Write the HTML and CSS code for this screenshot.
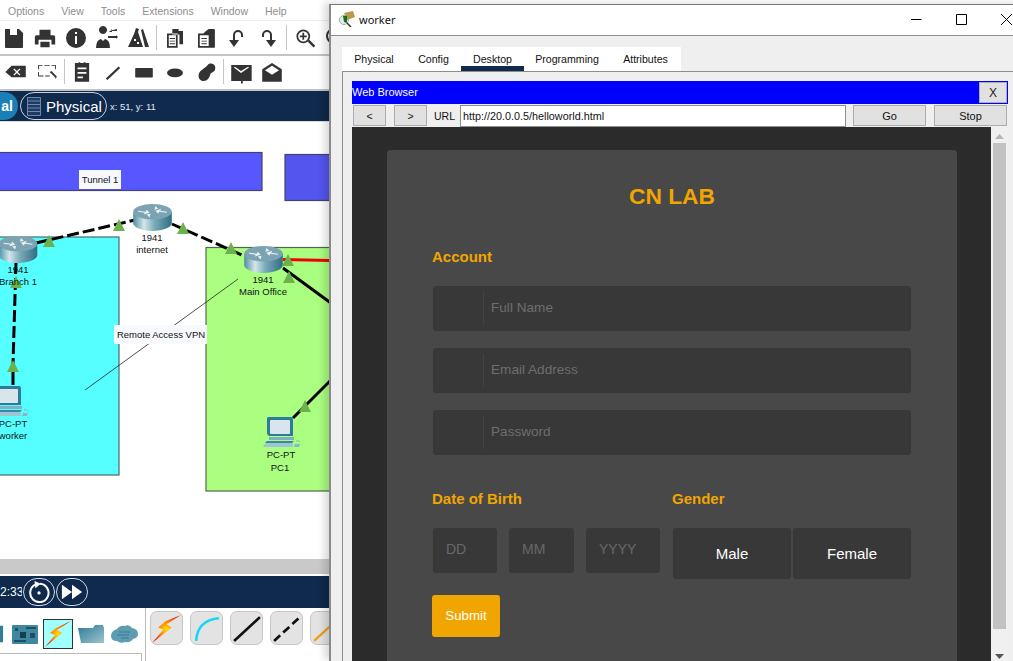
FILE: index.html
```html
<!DOCTYPE html>
<html lang="en">
<head>
<meta charset="utf-8">
<title>worker</title>
<link rel="stylesheet" href="styles.css">
</head>
<body>
<svg class="defs" width="0" height="0" aria-hidden="true">
  <defs>
    <linearGradient id="rbody" x1="0" x2="1" y1="0" y2="0">
      <stop offset="0" stop-color="#4f8ea3"/><stop offset=".28" stop-color="#d4e6ea"/><stop offset=".55" stop-color="#7aaab8"/><stop offset="1" stop-color="#2f6d84"/>
    </linearGradient>
    <radialGradient id="bolt" cx=".5" cy=".5" r=".55">
      <stop offset="0" stop-color="#ffe100"/><stop offset=".45" stop-color="#ff8a00"/><stop offset="1" stop-color="#f01800"/>
    </radialGradient>
    <linearGradient id="folder" x1="0" x2="1" y1="0" y2="1">
      <stop offset="0" stop-color="#2d7a94"/><stop offset="1" stop-color="#9cc4d0"/>
    </linearGradient>
    <symbol id="router" viewBox="0 0 40 28">
      <path d="M0 8v12c0 4 9 8 20 8s20-4 20-8V8z" fill="url(#rbody)"/>
      <ellipse cx="20" cy="8" rx="20" ry="8" fill="#7ba3b1"/>
      <path d="M5 7l8 1 1-2 3 3-6 2 1-2-7-1zM35 9l-8-1-1 2-3-3 6-2-1 2 7 1zM23 2l3 3-4 1zM17 14l-3-3 4-1z" fill="#e8f2f4"/>
    </symbol>
    <symbol id="pc" viewBox="0 0 38 32">
      <path d="M5 1h24l1 2v17H6L4 18V2z" fill="#2f7c98"/>
      <rect x="7" y="4" width="20" height="14" rx="1" fill="#d8e5ec"/>
      <path d="M6 21h25v3H6z" fill="#7fb0c2"/><path d="M4 25h27l-2 2H2z" fill="#3b87a2"/>
      <path d="M0 30l3-3h27v4H1z" fill="#9cc6d4"/><path d="M32 28l5 0-1 3h-5z" fill="#87b7c8"/>
      <path d="M33 25q3-1 4 1" fill="none" stroke="#87b7c8"/>
    </symbol>
  </defs>
</svg>

<div class="desktop">
  <section class="main">
    <nav class="menu">
      <span>Options</span><span>View</span><span>Tools</span><span>Extensions</span><span>Window</span><span>Help</span>
    </nav>

    <div class="tools row-one">
      <svg class="ico" viewBox="0 0 24 24"><path fill-rule="evenodd" d="M3 3h14l4 4v14q0 1-1 1H4q-1 0-1-1zM8 3v6h7V3z"/></svg>
      <svg class="ico" viewBox="-1 -1 26 26"><path fill-rule="evenodd" d="M6 3h12v6H6zM3 9h18q2 0 2 2v8h-4v-5H5v5H1v-8q0-2 2-2zM7 16h10v6H7z"/></svg>
      <svg class="ico" viewBox="0 0 24 24"><path fill-rule="evenodd" d="M12 2a10 10 0 1 1 0 20 10 10 0 0 1 0-20zM11 6v2h2V6zM11 10v8h2v-8z"/></svg>
      <svg class="ico" viewBox="0 0 24 24"><path d="M8 8a4 4 0 1 1 .01 0zM1 22q0-8 5-9l2 2 2-2q5 1 5 9zM14 5h8V3zM14 6l3-3v3zM13 10h8v2h-8zM21 9v4l2-2z"/></svg>
      <svg class="ico" viewBox="0 0 24 24"><path fill-rule="evenodd" d="M10 2l3 1-1 3 5 15H2L8 8zM8 13v2h2v-2zM11 16v2h2v-2zM15 4l2-1 6 18h-4z"/></svg>
      <i class="sep"></i>
      <svg class="ico" viewBox="-1.500 -1.500 27 27"><path fill-rule="evenodd" d="M9 2h7v2h5v15h-4V8h-8zM3 7h12v16H3zM5 9v12h8V9zM6 12h6v1H6zM6 15h6v1H6zM6 18h6v1H6z"/></svg>
      <svg class="ico" viewBox="-1.500 -1.500 27 27"><path fill-rule="evenodd" d="M3 7h6l3-3 3-2h6q1 0 1 1v19q0 1-1 1H3zM5 9v12h10V9zM7 12h6v1H7zM7 15h6v1H7zM7 18h6v1H7z"/></svg>
      <svg class="ico" viewBox="0 0 24 24"><path class="ico-line" d="M9 15V9a4 4 0 0 1 8 0v2"/><path d="M4 14h10l-5 7z"/></svg>
      <svg class="ico" viewBox="0 0 24 24"><path class="ico-line" d="M15 15V9a4 4 0 0 0-8 0v2"/><path d="M10 14h10l-5 7z"/></svg>
      <i class="sep"></i>
      <svg class="ico" viewBox="-2 -2 28 28"><path fill-rule="evenodd" d="M10 2a8 8 0 1 1 0 16 8 8 0 0 1 0-16zM10 4a6 6 0 1 0 0 12 6 6 0 0 0 0-12zM9 6h2v3h3v2h-3v3H9v-3H6V9h3zM15 16l2-2 7 7-2 2z"/></svg>
      <svg class="ico" viewBox="0 0 24 24"><path fill-rule="evenodd" d="M10 2a8 8 0 1 1 0 16 8 8 0 0 1 0-16zM10 4a6 6 0 1 0 0 12 6 6 0 0 0 0-12z"/></svg>
    </div>

    <div class="tools row-two">
      <svg class="ico" viewBox="-1.500 -1.500 27 27"><path fill-rule="evenodd" d="M7 5h16v13H7L0 12zM10 8l-1 1 3 3-3 3 1 1 3-3 3 3 1-1-3-3 3-3-1-1-3 3z"/></svg>
      <svg class="ico" viewBox="-1.500 -1.500 27 27"><path d="M3 4h4v1H3zM9 4h6v1H9zM17 4h5v1h-5zM21 5h1v4h-1zM2 4h1v5H2zM2 12h1v5H2zM3 16h5v1H3zM10 16h5v1h-5zM15 12l2-1 6 6-1 3-1-2z"/></svg>
      <i class="sep"></i>
      <svg class="ico" viewBox="-1.500 -1.500 27 27"><path fill-rule="evenodd" d="M4 2h4V1h2v1h4V1h2v1h4v21H4zM7 7v2h10V7zM7 12v2h10v-2zM7 17v2h6v-2z"/></svg>
      <svg class="ico" viewBox="-3 -3 30 30"><path d="M3 20L19 5l2 2L5 22z"/></svg>
      <svg class="ico" viewBox="-3 -3 30 30"><rect x="1" y="7" width="22" height="12" rx="1"/></svg>
      <svg class="ico" viewBox="-3 -3 30 30"><ellipse cx="12" cy="13" rx="10" ry="5.500"/></svg>
      <svg class="ico" viewBox="-1.500 -1.500 27 27"><path d="M15 3c5-2 9 2 7 7-1 2-3 2-5 4-1 5-4 9-9 8-4-1-5-5-4-8 1-4 7-6 11-11z"/></svg>
      <i class="sep"></i>
      <svg class="ico" viewBox="-1.500 -1.500 27 27"><path fill-rule="evenodd" d="M1 4h23v18H14v3h-2v-3H1zM4 7l8 6 9-6-1-1-8 5-7-5z"/></svg>
      <svg class="ico" viewBox="-1.500 -1.500 27 27"><path fill-rule="evenodd" d="M12 2l11 7v14H1V9zM12 5L4 10l8 5 8-5z"/></svg>
    </div>

    <div class="navbar">
      <span class="pill-logical">al</span>
      <span class="pill-physical">
        <svg class="rack" viewBox="0 0 14 19"><path d="M.5.500h13v18H.5zM.5 4h13M.5 7.500h13M.5 11h13M.5 14.500h13" fill="#1c3c66" stroke="#7088a8"/></svg>
        <span>Physical</span>
      </span>
      <span class="coords">x: 51, y: 11</span>
    </div>

    <div class="canvas">
      <svg class="diagram" viewBox="0 122 330 437">
        <rect class="tunnel" x="-6" y="152.500" width="268" height="38"/>
        <rect class="tunnel dim" x="285" y="154.500" width="60" height="46"/>
        <rect class="cyan" x="-10" y="237" width="129" height="238"/>
        <rect class="lime" x="206" y="247.500" width="140" height="243.500"/>
        <path class="thin" d="M238 279L85 390"/>
        <path class="dash" d="M36 243L135 220M172 224L244 256M16 262L13 364"/>
        <path class="solid" d="M13 372V385M283 268L335 306M335 376L293 418"/>
        <path class="red" d="M283 259.500L335 260.500"/>
        <use href="#router" x="133" y="204" width="39" height="27"/>
        <use href="#router" x="-2" y="236" width="40" height="27"/>
        <use href="#router" x="244" y="246" width="39" height="27"/>
        <use href="#pc" x="-10" y="385" width="40" height="32"/>
        <use href="#pc" x="263" y="416" width="38" height="32"/>
        <path class="tri" d="M119 219l6 12h-12zM49 235l6 12h-12zM183 222l6 12h-12zM231 242l6 12h-12zM288 254l6 12h-12zM289 271l6 12h-12zM16 276l6 12h-12zM13 360l6 12h-12zM305 400l6 12h-12z"/>
        <rect class="tag" x="79" y="170" width="42" height="19"/>
        <rect class="tag" x="114" y="325" width="93" height="19"/>
        <text class="lbl" x="100" y="183">Tunnel 1</text>
        <text class="lbl" x="161" y="338">Remote Access VPN</text>
        <text class="lbl" x="152" y="241">1941</text>
        <text class="lbl" x="152" y="253">internet</text>
        <text class="lbl" x="18" y="273">1941</text>
        <text class="lbl" x="18" y="285">Branch 1</text>
        <text class="lbl" x="263" y="283">1941</text>
        <text class="lbl" x="263" y="295">Main Office</text>
        <text class="lbl" x="13" y="427">PC-PT</text>
        <text class="lbl" x="13" y="439">worker</text>
        <text class="lbl" x="281" y="458">PC-PT</text>
        <text class="lbl" x="280" y="471">PC1</text>
      </svg>
    </div>
    <div class="hscroll"></div>

    <div class="timebar">
      <span class="clock">2:33</span>
      <span class="round">
        <svg class="round-ico" viewBox="0 0 24 24"><path d="M8 4a10 10 0 1 0 5-1" fill="none" stroke="#fff" stroke-width="2.200"/><path d="M7 0l7 3-6 5z" fill="#fff"/><circle cx="12" cy="13" r="1.800" fill="#fff"/></svg>
      </span>
      <span class="round">
        <svg class="round-ico" viewBox="0 0 24 24"><path d="M1 4l11 8-11 8zM12 4l11 8-11 8z" fill="#fff"/></svg>
      </span>
    </div>

    <div class="palette">
      <div class="cats">
        <div class="cat-row">
          <svg class="cat cat-cut" viewBox="0 0 4 22"><rect width="4" height="22" fill="#2e7f9b"/></svg>
          <svg class="cat cat-board" viewBox="0 0 26 19"><rect width="26" height="19" rx="1" fill="#3d87a0"/><rect x="8" y="7" width="6" height="6" fill="#1a3d4c"/><path d="M14 2h10v2H14zM2 15h12v2H2zM3 3h3v3H3zM18 8h5v5h-5z" fill="#204f60"/></svg>
          <span class="cat-on">
            <svg class="cat-bolt" viewBox="0 0 28 28"><path d="M27 1L13 10l5 3L1 27l10-12-5-2 6-5z" fill="url(#bolt)"/></svg>
          </span>
          <svg class="cat cat-folder" viewBox="0 0 27 20"><path d="M17 1h8l1 3v15H3L0 4h15z" fill="url(#folder)"/></svg>
          <svg class="cat cat-cloud" viewBox="0 0 28 18"><path d="M6 4q3-4 8-3 4-2 7 2 6 1 6 6 0 4-5 5-3 4-8 3-5 2-8-1-6 0-6-5 0-5 6-7z" fill="#5e9cb2"/><path d="M8 7h11M6 10h12M10 13h8" stroke="#3a7a92" fill="none"/></svg>
        </div>
        <div class="cat-list"></div>
      </div>
      <div class="links">
        <span class="link"><svg class="link-ico" viewBox="0 0 30 30"><path d="M29 2L15 11l5 3L1 29l11-13-5-2 7-6z" fill="url(#bolt)"/></svg></span>
        <span class="link"><svg class="link-ico" viewBox="0 0 30 30"><path d="M5 27Q6 7 27 5" fill="none" stroke="#19d7f4" stroke-width="2.500"/></svg></span>
        <span class="link"><svg class="link-ico" viewBox="0 0 30 30"><path d="M3 27L28 4" stroke="#111" stroke-width="2.600"/></svg></span>
        <span class="link"><svg class="link-ico" viewBox="0 0 30 30"><path d="M3 27L28 4" stroke="#111" stroke-width="2.600" stroke-dasharray="8 4"/></svg></span>
        <span class="link"><svg class="link-ico" viewBox="0 0 30 30"><path d="M3 27L28 4" stroke="#f39c12" stroke-width="2.200"/></svg></span>
      </div>
    </div>
  </section>

  <section class="window">
    <header class="titlebar">
      <svg class="win-ico" viewBox="0 0 18 16"><circle cx="6" cy="9" r="4.500" fill="#e6eee6" stroke="#9aa"/><path d="M9 12l4 4" stroke="#333" stroke-width="1.500"/><path d="M6 2l9-2 2 6-8 3z" fill="#b89a4a"/><path d="M5 5l4 0 0 7-3-1z" fill="#14701e"/></svg>
      <span class="win-title">worker</span>
      <span class="controls">
        <span class="ctl"><svg class="ctl-ico" viewBox="0 0 11 11"><path d="M0 5.500h10.500" stroke="#000"/></svg></span>
        <span class="ctl"><svg class="ctl-ico" viewBox="0 0 11 11"><path d="M.5.500h10v10H.5z" fill="none" stroke="#000"/></svg></span>
        <span class="ctl"><svg class="ctl-ico" viewBox="0 0 11 11"><path d="M0 0l11 11M11 0L0 11" stroke="#000"/></svg></span>
      </span>
    </header>
    <div class="win-body">
      <div class="tabs">
        <span class="tab t-physical">Physical</span>
        <span class="tab t-config">Config</span>
        <span class="tab t-desktop active">Desktop</span>
        <span class="tab t-programming">Programming</span>
        <span class="tab t-attributes">Attributes</span>
      </div>
      <div class="panel">
        <div class="browser">
          <div class="browser-head">
            <span class="head-title">Web Browser</span>
            <span class="head-x">X</span>
          </div>
          <div class="urlrow">
            <span class="btn nav-btn">&lt;</span>
            <span class="btn nav-btn">&gt;</span>
            <span class="url-label">URL</span>
            <span class="url-field">http://20.0.0.5/helloworld.html</span>
            <span class="btn cmd-btn">Go</span>
            <span class="btn cmd-btn">Stop</span>
          </div>
          <div class="viewport">
            <div class="page">
              <div class="card">
                <h1 class="card-title">CN LAB</h1>
                <h2 class="section first">Account</h2>
                <div class="field"><i class="field-icon"></i><span class="ph">Full Name</span></div>
                <div class="field"><i class="field-icon"></i><span class="ph">Email Address</span></div>
                <div class="field"><i class="field-icon"></i><span class="ph">Password</span></div>
                <div class="split">
                  <div class="split-col">
                    <h2 class="section">Date of Birth</h2>
                    <div class="dates">
                      <span class="date d-dd">DD</span>
                      <span class="date d-mm">MM</span>
                      <span class="date d-yy">YYYY</span>
                    </div>
                  </div>
                  <div class="split-col">
                    <h2 class="section">Gender</h2>
                    <div class="genders">
                      <span class="gender">Male</span>
                      <span class="gender">Female</span>
                    </div>
                  </div>
                </div>
                <span class="submit">Submit</span>
              </div>
            </div>
            <div class="vscroll">
              <svg class="arrow" viewBox="0 0 9 5"><path d="M4.500 0L9 5H0z" fill="#b5b5b5"/></svg>
              <div class="thumb"></div>
              <svg class="arrow" viewBox="0 0 9 5"><path d="M0 0h9L4.500 5z" fill="#555"/></svg>
            </div>
          </div>
        </div>
      </div>
    </div>
  </section>
</div>
</body>
</html>
```

FILE: styles.css
```css
* { box-sizing: border-box; }
html, body { margin: 0; padding: 0; background: #fff; }
body { font-family: "Liberation Sans", Arial, sans-serif; }
.defs { position: absolute; }

.desktop { position: relative; width: 1013px; height: 661px; overflow: hidden; }

/* back window */
.main { width: 335px; height: 661px; display: flex; flex-direction: column; background: #fff; }

.menu { height: 21px; flex: none; display: flex; gap: 17px; align-items: center; padding: 1px 0 0 8px; font-size: 10.500px; color: #8e8e8e; border-bottom: 1px solid #eee; }

.tools { flex: none; display: flex; align-items: center; height: 35px; gap: 7px; overflow: hidden; border-bottom: 2px solid #c4c4c4; }
.row-one { padding-left: 2px; }
.row-two { padding: 0 0 2px 4px; height: 35px; }
.row-two .sep { margin: 0 -2px; }
.ico { width: 24px; height: 24px; flex: none; fill: #333; }
.ico-line { fill: none; stroke: #333; stroke-width: 2; }
.sep { flex: none; width: 1px; height: 25px; background: #c6c6c6; margin: 0 -1px; }

.navbar { flex: none; height: 31px; background: #0f2a4d; display: flex; align-items: center; position: relative; border-bottom: 1px solid #ddd; }
.pill-logical { width: 18px; height: 28px; margin-right: 2px; background: #1a7fb5; color: #fff; border-radius: 0 14px 14px 0; font-size: 14px; font-weight: bold; display: flex; align-items: center; justify-content: flex-end; padding-right: 5px; }
.pill-physical { width: 87px; height: 28px; border: 1px solid #c9d4e2; border-radius: 14px; color: #fff; display: flex; align-items: center; font-size: 15px; padding: 1px 0 0 6px; gap: 5px; }
.rack { width: 14px; height: 19px; flex: none; }
.coords { color: #e6ebf2; font-size: 9.500px; margin-left: 3px; }

.canvas { flex: none; height: 437px; background: #fff; overflow: hidden; }
.diagram { display: block; width: 330px; height: 437px; }
.tunnel { fill: #5757ff; stroke: #44446a; stroke-width: 1.200; }
.tunnel.dim { fill: #5454ee; }
.cyan { fill: #55ffff; stroke: #4c6a6a; stroke-width: 1.200; }
.lime { fill: #aaff80; stroke: #556650; stroke-width: 1.200; }
.thin { stroke: #222; stroke-width: .8; fill: none; }
.dash { stroke: #000; stroke-width: 3; stroke-dasharray: 12 4; fill: none; }
.solid { stroke: #000; stroke-width: 3; fill: none; }
.red { stroke: #f00000; stroke-width: 3; fill: none; }
.tri { fill: #6bb24c; }
.tag { fill: #f8f8ff; }
.lbl { font-family: "Liberation Sans", Arial, sans-serif; font-size: 9.500px; text-anchor: middle; fill: #111; }

.hscroll { flex: none; height: 15px; background: #c9c9c9; border-top: 0; }

.timebar { flex: none; height: 32px; margin-top: 2px; background: #0f2a4d; display: flex; align-items: center; gap: 1px; color: #fff; font-size: 12px; position: relative; }
.clock { width: 22px; text-align: right; overflow: hidden; white-space: nowrap; }
.round { width: 32px; height: 28px; border: 1px solid #d5dbe6; border-radius: 14px; display: flex; align-items: center; justify-content: center; }
.round-ico { width: 22px; height: 22px; }

.palette { flex: 1; display: flex; min-height: 0; background: #fff; }
.cats { width: 146px; flex: none; border-right: 1px solid #bbb; display: flex; flex-direction: column; }
.cat-row { height: 45px; display: flex; align-items: center; padding-top: 7px; flex: none; position: relative; }
.cat { flex: none; }
.cat-cut { width: 3px; height: 22px; margin-right: 9px; }
.cat-board { width: 26px; height: 19px; margin-right: 5px; }
.cat-on { width: 30px; height: 30px; background: #a0ffff; border: 1px solid #333; display: flex; align-items: center; justify-content: center; margin-right: 5px; }
.cat-bolt { width: 28px; height: 28px; }
.cat-folder { width: 27px; height: 20px; margin-right: 6px; }
.cat-cloud { width: 28px; height: 18px; }
.cat-list { flex: 1; width: 142px; margin-top: 0; border: 1px solid #bbb; border-left: 0; border-bottom: 0; }
.links { display: flex; gap: 7px; padding: 3px 0 0 4px; align-items: flex-start; overflow: hidden; }
.link { flex: none; width: 33px; height: 34px; background: #e3e3e3; border: 1px solid #c6c6c6; border-radius: 7px; display: flex; align-items: center; justify-content: center; }
.link-ico { width: 31px; height: 31px; }

/* front window */
.window { position: absolute; left: 329px; top: 4px; width: 701px; height: 657px; background: #efefef; border-left: 2px solid #8a8a8a; border-top: 1px solid #777; display: flex; flex-direction: column; box-shadow: -5px -1px 7px rgba(0,0,0,.14); }
.titlebar { flex: none; height: 31px; background: #fff; border-bottom: 1px solid #8d8d8d; display: flex; align-items: center; padding: 0 1px 2px 7px; }
.win-ico { width: 18px; height: 16px; flex: none; margin-right: 3px; }
.win-title { font-family: "Noto Sans", sans-serif; font-size: 11px; color: #111; }
.controls { margin-left: auto; display: flex; }
.ctl { width: 45px; height: 28px; display: flex; align-items: center; justify-content: center; }
.ctl-ico { width: 11px; height: 11px; }

.win-body { flex: 1; min-height: 0; padding: 11px 0 0 11px; display: flex; flex-direction: column; }
.tabs { flex: none; align-self: flex-start; height: 24px; background: #fff; display: flex; font-size: 10.600px; color: #111; }
.tab { display: flex; align-items: center; justify-content: center; white-space: nowrap; padding-bottom: 1px; }
.t-physical { width: 64px; }
.t-config { width: 55px; }
.t-desktop { width: 63px; }
.t-programming { width: 86px; }
.t-attributes { width: 71px; }
.tab.active { border-bottom: 5px solid #0f2a4d; padding-top: 4px; padding-bottom: 0; }

.panel { flex: 1; min-height: 0; border-top: 1px solid #8d8d8d; border-left: 1px solid #8d8d8d; padding: 9px 0 0 9px; }
.browser { width: 656px; height: 100%; display: flex; flex-direction: column; }
.browser-head { flex: none; height: 23px; background: #0000ff; color: #fff; font-size: 11px; display: flex; align-items: center; justify-content: space-between; padding-right: 1px; }
.head-title { padding-bottom: 2px; }
.head-x { width: 28px; height: 21px; background: #e1e1e1; border: 1px solid #adadad; color: #222; font-size: 12px; display: flex; align-items: center; justify-content: center; }

.urlrow { flex: none; height: 23px; display: flex; align-items: center; font-size: 10.500px; color: #111; padding-left: 1px; }
.btn { flex: none; height: 21px; background: #e1e1e1; border: 1px solid #adadad; display: flex; align-items: center; justify-content: center; }
.nav-btn { width: 33px; margin-right: 8px; }
.url-label { flex: none; width: 25px; margin: 0 1px 0 -1px; text-align: left; font-size: 10.500px; }
.url-field { flex: none; width: 386px; height: 22px; background: #fff; border: 1px solid #8f8f8f; display: flex; align-items: center; padding-left: 2px; font-size: 10.800px; margin-right: 7px; }
.cmd-btn { width: 73px; margin-right: 8px; font-size: 11px; }
.cmd-btn:last-child { margin-right: 0; }

.viewport { flex: 1; min-height: 0; display: flex; }
.page { width: 639px; flex: none; background: #2b2b2b; padding: 23px 0 0 35px; overflow: hidden; }
.card { width: 570px; height: 600px; background: #484848; border-radius: 4px; padding: 32px 0 0 45px; }
.card-title { margin: 0 0 0 -45px; width: 570px; text-align: center; font-size: 22.800px; line-height: 28px; font-weight: bold; color: #f0a500; }
.section { margin: 0; font-size: 15px; line-height: 18px; font-weight: bold; color: #f0a500; }
.section.first { margin-top: 38px; margin-bottom: 20px; }

.field { width: 478px; height: 45px; margin: 0 0 17px 1px; background: #383838; border-radius: 3px; display: flex; align-items: center; }
.field-icon { display: block; width: 51px; height: 33px; border-right: 1px solid #444; flex: none; }
.ph { padding: 0 0 2px 7px; font-size: 13.600px; color: #6e6e6e; }

.split { display: flex; margin-top: 35px; }
.split-col { width: 240px; }
.split-col .section { margin-bottom: 20px; }
.dates { display: flex; gap: 12px; padding-left: 1px; }
.date { height: 45px; background: #383838; border-radius: 3px; display: flex; align-items: center; padding: 0 0 4px 13px; font-size: 14px; color: #686868; }
.d-dd { width: 64px; }
.d-mm { width: 65px; }
.d-yy { width: 74px; }
.genders { display: flex; gap: 2px; padding-left: 1px; }
.gender { width: 118px; height: 51px; background: #383838; border-radius: 3px; display: flex; align-items: center; justify-content: center; font-size: 15px; color: #fff; }

.submit { display: flex; width: 68px; height: 42px; margin-top: 16px; padding-bottom: 2px; background: #f0a500; border-radius: 3px; color: #fff; font-size: 13.300px; align-items: center; justify-content: center; }

.vscroll { width: 17px; flex: none; background: #f0f0f0; display: flex; flex-direction: column; align-items: center; padding-top: 7px; }
.arrow { width: 9px; height: 5px; flex: none; }
.thumb { width: 13px; height: 486px; background: #c2c2c2; margin: 4px 0 25px; }
```
